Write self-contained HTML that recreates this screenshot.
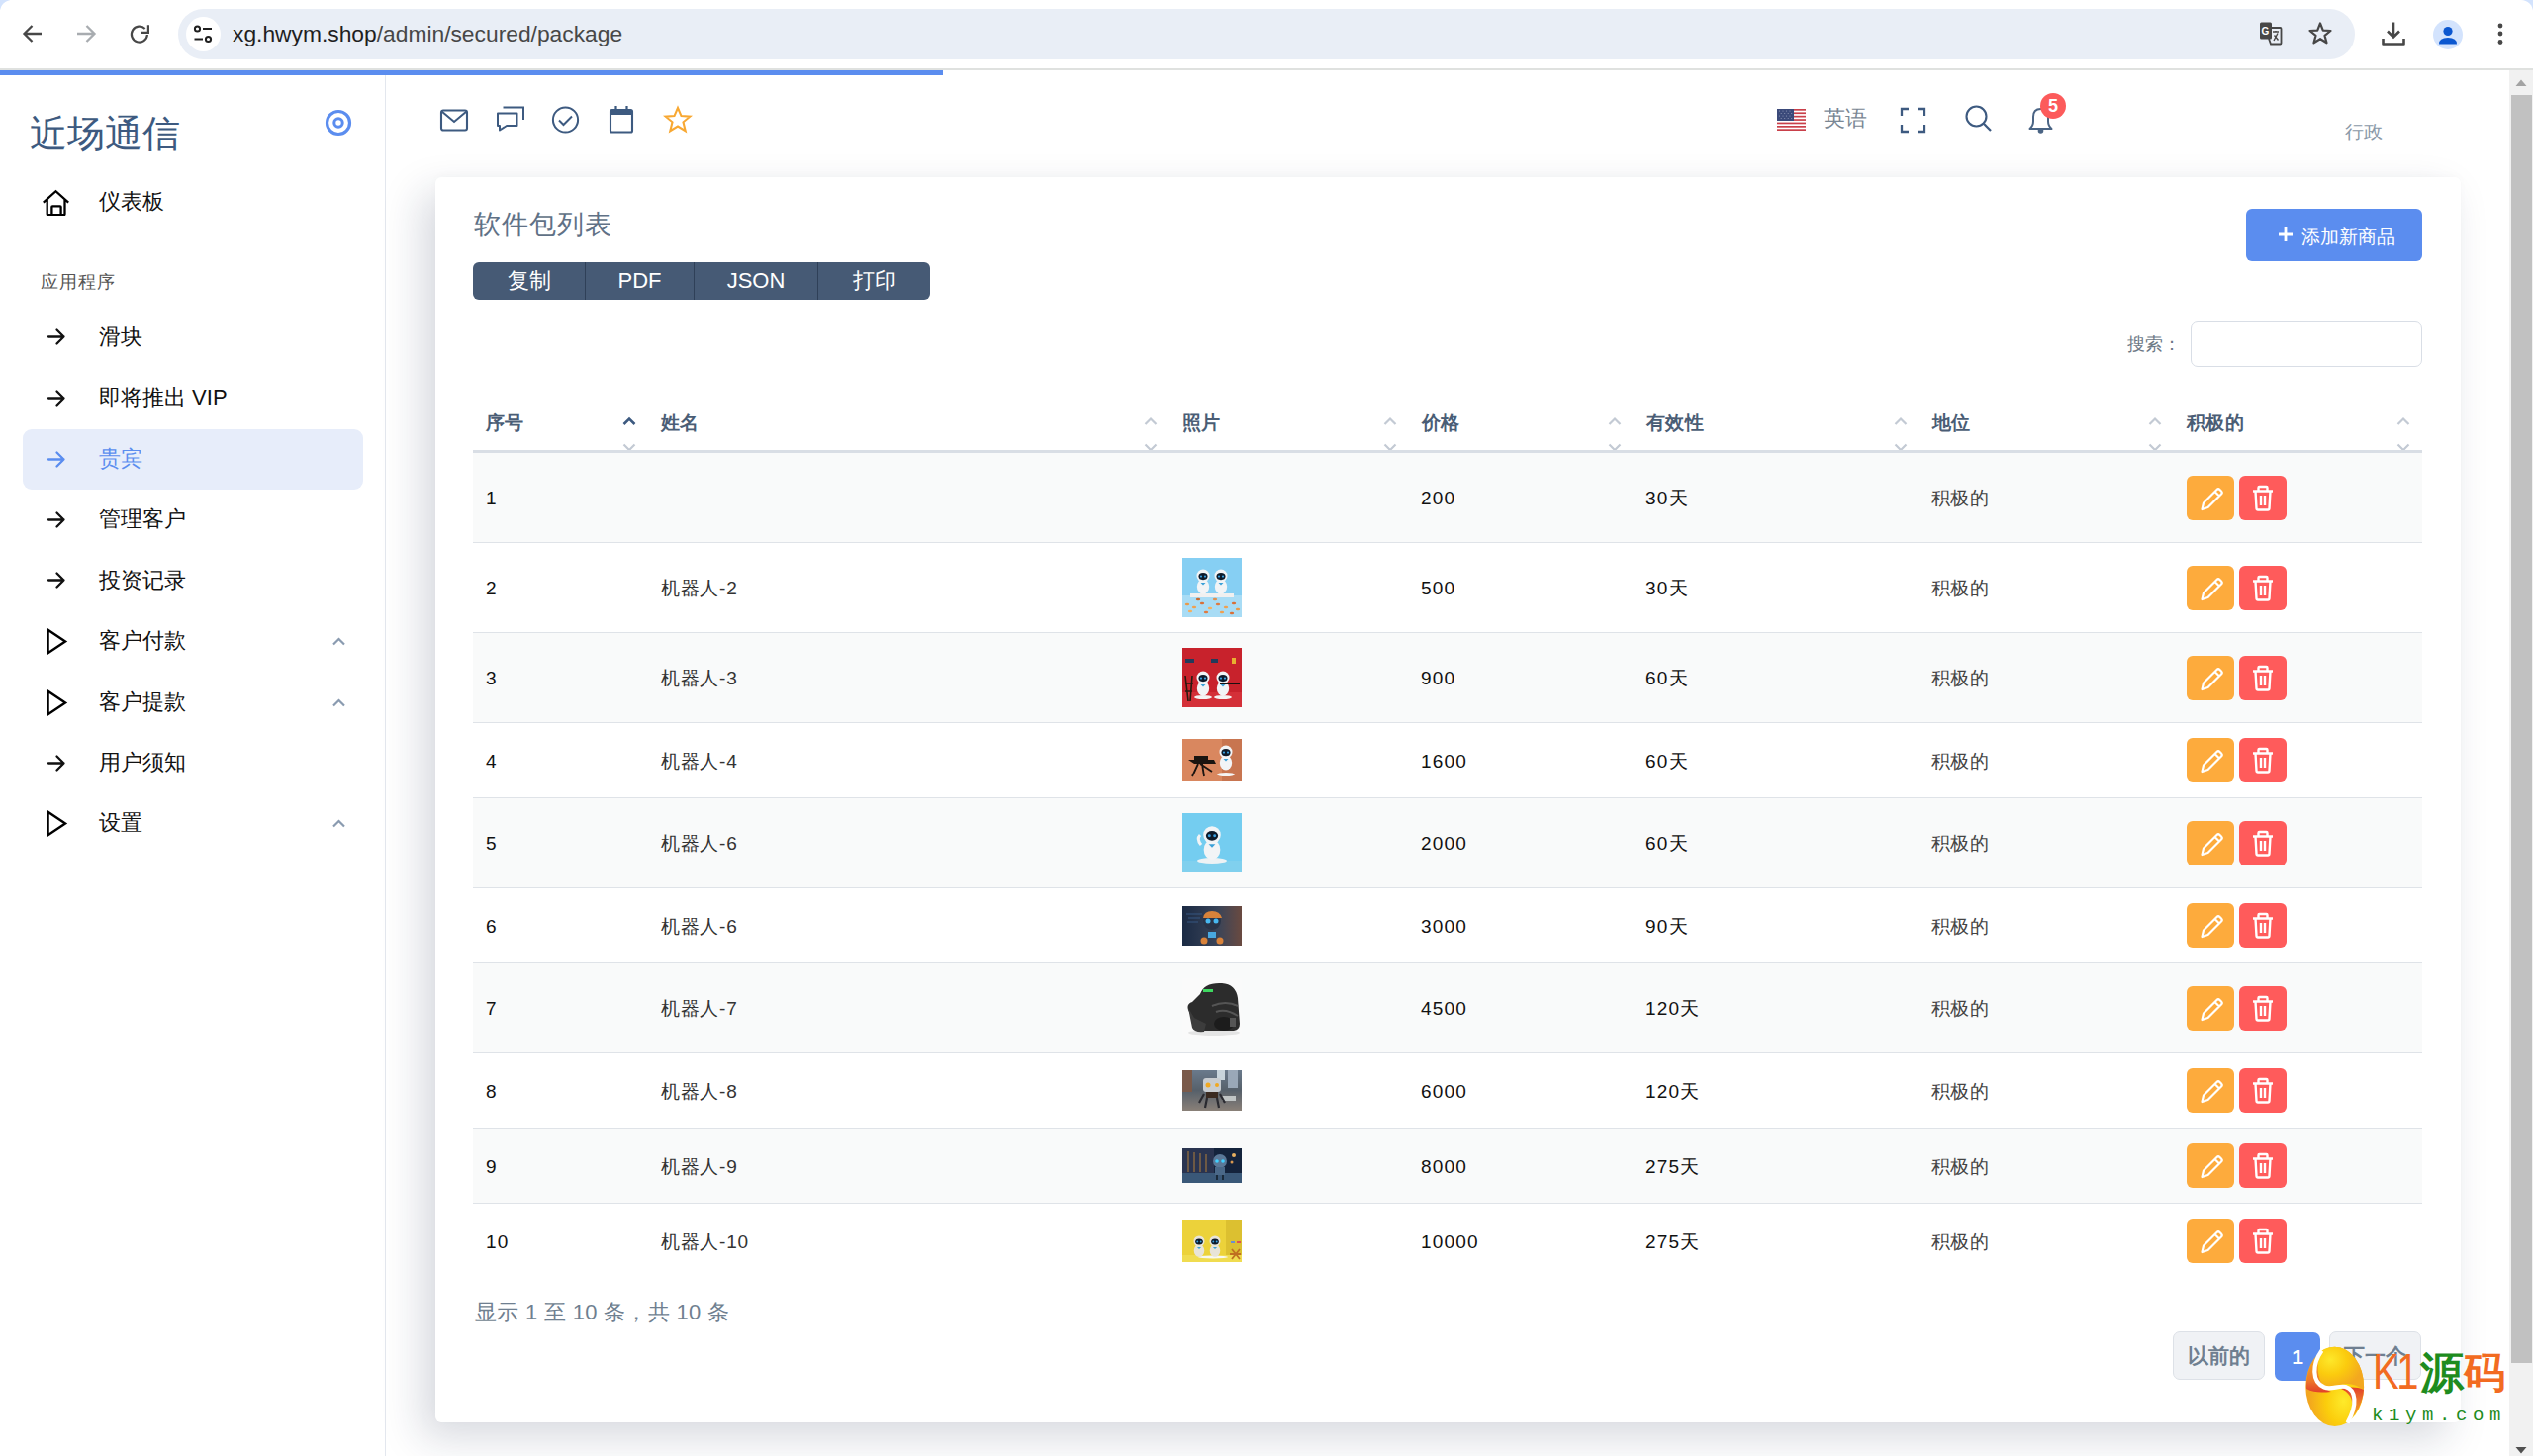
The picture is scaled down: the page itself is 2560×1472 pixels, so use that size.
<!DOCTYPE html>
<html><head><meta charset="utf-8">
<style>
*{box-sizing:border-box;margin:0;padding:0}
html,body{width:2560px;height:1472px;overflow:hidden;background:#fff;font-family:"Liberation Sans",sans-serif}
.abs{position:absolute}
/* chrome */
#chrome{position:absolute;left:0;top:0;width:2560px;height:70px;background:#fff}
#omni{position:absolute;left:180px;top:9px;width:2200px;height:51px;border-radius:26px;background:#e9eef6}
#url{position:absolute;left:235px;top:20px;font-size:22.8px;color:#1f1f1f;white-space:nowrap;line-height:28px}
#url span{color:#474747}
#line{position:absolute;left:0;top:69px;width:2560px;height:2px;background:#dfe1df}
#prog{position:absolute;z-index:5;left:0;top:71px;width:953px;height:5px;background:#5b8def}
/* sidebar */
#side{position:absolute;left:0;top:71px;width:390px;height:1401px;background:#fff;border-right:1px solid #e3e7ee}
.logo{position:absolute;left:30px;top:110px;font-size:38px;color:#3d5a80;line-height:50px;white-space:nowrap}
.nav{position:absolute;left:0;width:389px;height:30px}
.nav .t{position:absolute;left:100px;top:0;font-size:22px;line-height:30px;color:#333;white-space:nowrap}
.nav svg{position:absolute}
.act{position:absolute;left:23px;top:434px;width:344px;height:61px;border-radius:9px;background:#e7edfa}
.sec{position:absolute;left:41px;top:272px;font-size:17.5px;line-height:26px;color:#555;letter-spacing:1px}
/* header */
.hico{position:absolute}
/* card */
#card{position:absolute;left:440px;top:179px;width:2047px;height:1259px;background:#fff;border-radius:6px;box-shadow:-14px 16px 40px rgba(25,35,70,0.17),0 -2px 8px rgba(25,35,70,0.018)}
#scroll{position:absolute;left:2536px;top:71px;width:24px;height:1401px;background:#f1f1f1}
#thumb{position:absolute;left:2538px;top:96px;width:21px;height:1282px;background:#c1c1c1}
.ttl{position:absolute;left:479px;top:210px;font-size:27px;line-height:34px;color:#607186;letter-spacing:1px;white-space:nowrap}
.bg{position:absolute;left:478px;top:265px;width:462px;height:38px;border-radius:6px;background:#465a75;overflow:hidden}
.bg div{position:absolute;top:0;height:38px;line-height:38px;text-align:center;color:#fff;font-size:22px}
.addb{position:absolute;left:2270px;top:211px;width:178px;height:53px;border-radius:6px;background:#5b8def}
.addb span{position:absolute;left:56px;top:16px;font-size:19px;line-height:26px;color:#fff;letter-spacing:0px;white-space:nowrap}
.th{position:absolute;top:415px;font-size:19px;line-height:26px;font-weight:bold;color:#4a5d75;letter-spacing:0.3px;white-space:nowrap}
.td{position:absolute;font-size:19px;line-height:26px;color:#111;letter-spacing:1.2px;white-space:nowrap}
.td.nm{color:#333;letter-spacing:0.7px}
.td.st{color:#444;letter-spacing:0.3px}
.img{position:absolute;width:60px;overflow:hidden}.img svg{display:block}
.be{position:absolute;left:2210px;width:48px;height:45px;border-radius:6px;background:#fdab3d}
.bd{position:absolute;left:2263px;width:48px;height:45px;border-radius:6px;background:#ff5b5b}
.be svg,.bd svg{position:absolute;left:0;top:0}
.pg{position:absolute;top:1346px;width:93px;height:49px;border-radius:7px;background:#f0f2f5;border:1px solid #dde1e7;color:#6f7f90;font-weight:bold;font-size:21px;line-height:47px;text-align:center}
.r2{background:linear-gradient(#8fd3f5,#79c9ef 60%,#e9b27a)}
.r3{background:linear-gradient(#c41f2b,#d2323a)}
.r4{background:linear-gradient(90deg,#c9744e,#e0906a)}
.r5{background:linear-gradient(#72cdf0,#80d2f2)}
.r6{background:linear-gradient(90deg,#1f2d44,#3b4660 50%,#6a5040)}
.r7{background:radial-gradient(circle at 55% 55%,#2a2a2a 0,#3a3a3a 40%,#f5f5f5 60%)}
.r8{background:linear-gradient(#7890a8,#4a5260 60%,#b0a090)}
.r9{background:linear-gradient(90deg,#1a2640,#2a4060 50%,#1a2a40)}
.r10{background:linear-gradient(#f0d840,#e4c430)}
</style></head><body>
<div id="chrome">
  <div class="abs" style="left:0;top:0;width:10px;height:10px;background:#d3e3fd"></div>
  <div class="abs" style="left:0;top:0;width:12px;height:12px;background:#fff;border-top-left-radius:12px"></div>
  <div class="abs" style="left:2548px;top:0;width:12px;height:12px;background:#d3e3fd"></div><div class="abs" style="left:2536px;top:0;width:24px;height:14px;background:#fff;border-top-right-radius:12px"></div>
  <div id="omni"></div>
  <svg class="abs" style="left:20px;top:22px" width="26" height="24" viewBox="0 0 26 24"><path d="M22 12 H4.5 M12.5 4 L4.5 12 L12.5 20" fill="none" stroke="#474747" stroke-width="2.3"/></svg>
<svg class="abs" style="left:74px;top:22px" width="26" height="24" viewBox="0 0 26 24"><path d="M4 12 H21.5 M13.5 4 L21.5 12 L13.5 20" fill="none" stroke="#a8acb0" stroke-width="2.3"/></svg>
<svg class="abs" style="left:127px;top:20px" width="28" height="28" viewBox="0 0 28 28"><path d="M21.90 15.00 A8.0 8.0 0 1 1 19.65 9.04" fill="none" stroke="#474747" stroke-width="2.2"/><path d="M22.9 5.2 V12.8 H15.5" fill="none" stroke="#474747" stroke-width="2.2"/></svg>
<div class="abs" style="left:188px;top:17px;width:35px;height:35px;border-radius:18px;background:#fff"></div>
<svg class="abs" style="left:192px;top:21px" width="26" height="26" viewBox="0 0 26 26"><circle cx="7.5" cy="8" r="2.6" fill="none" stroke="#1f1f1f" stroke-width="2"/><path d="M13 8 H22" stroke="#1f1f1f" stroke-width="2"/><circle cx="18.5" cy="18.5" r="2.6" fill="none" stroke="#1f1f1f" stroke-width="2"/><path d="M4.5 18.5 H13" stroke="#1f1f1f" stroke-width="2"/></svg>
<svg class="abs" style="left:2282px;top:20px" width="28" height="28" viewBox="0 0 28 28"><rect x="2" y="2.5" width="12" height="17" rx="1.5" fill="#474747"/><path d="M13 8 H22.5 Q23.5 8 23.5 9 V23.5 Q23.5 24.5 22.5 24.5 H13 L11 19" fill="none" stroke="#474747" stroke-width="1.8"/><text x="3.5" y="15" font-size="10" font-weight="bold" fill="#fff" font-family="Liberation Sans">G</text><path d="M15 12 H21 M18 11 V12.5 M16 21 L20 13.5 M16.5 15.5 L20.5 20.5" stroke="#474747" stroke-width="1.4"/></svg>
<svg class="abs" style="left:2331px;top:20px" width="28" height="28" viewBox="0 0 28 28"><path d="M14 3.5 L16.8 10.6 L24.5 11 L18.5 15.9 L20.5 23.3 L14 19.2 L7.5 23.3 L9.5 15.9 L3.5 11 L11.2 10.6 Z" fill="none" stroke="#474747" stroke-width="2.2" stroke-linejoin="round"/></svg>
<svg class="abs" style="left:2405px;top:20px" width="28" height="28" viewBox="0 0 28 28"><path d="M14 2.5 V17.5 M8 11.5 L14 17.5 L20 11.5" fill="none" stroke="#474747" stroke-width="2.6"/><path d="M3.5 19 V24.5 H24.5 V19" fill="none" stroke="#474747" stroke-width="2.6" stroke-linejoin="round"/></svg>
<div class="abs" style="left:2459px;top:20px;width:30px;height:30px;border-radius:15px;background:#d3e3fd"></div>
<svg class="abs" style="left:2459px;top:20px" width="30" height="30" viewBox="0 0 30 30"><circle cx="15" cy="11.5" r="4.6" fill="#0b57d0"/><path d="M6 24.5 Q6 18 15 18 Q24 18 24 24.5 Z" fill="#0b57d0"/></svg>
<svg class="abs" style="left:2521px;top:21px" width="12" height="26" viewBox="0 0 12 26"><circle cx="6" cy="5" r="2.4" fill="#474747"/><circle cx="6" cy="13" r="2.4" fill="#474747"/><circle cx="6" cy="21.5" r="2.4" fill="#474747"/></svg>
<div id="url">xg.hwym.shop<span>/admin/secured/package</span></div>
</div>
<div id="line"></div>
<div id="prog"></div>
<div id="side"></div>
<div class="logo">近场通信</div>
<svg class="abs" style="left:327px;top:109px" width="30" height="30" viewBox="0 0 30 30"><circle cx="15" cy="15" r="11.5" fill="none" stroke="#5b8def" stroke-width="3.2"/><circle cx="15" cy="15" r="4.2" fill="none" stroke="#5b8def" stroke-width="3"/></svg>
<div class="sec">应用程序</div>
<div class="act"></div>
<div class="nav" style="top:189.0px"><svg style="left:42px;top:1px" width="28" height="28" viewBox="0 0 28 28"><path d="M1.8 14.6 L14.5 3.2 L27.2 14.6 M5.7 11.5 V26.2 Q5.7 27.2 6.7 27.2 H22.5 Q23.5 27.2 23.5 26.2 V11.5 M10.4 27 V19 Q10.4 18.3 11.1 18.3 H18.9 Q19.6 18.3 19.6 19 V27" fill="none" stroke="#000" stroke-width="2.3" stroke-linejoin="miter"/></svg><div class="t" style="color:#111">仪表板</div></div>
<div class="nav" style="top:325.5px"><svg style="left:47px;top:5.5px" width="20" height="19" viewBox="0 0 20 19"><path d="M2 9.5 H17.5 M10.5 2.5 L17.5 9.5 L10.5 16.5" fill="none" stroke="#111" stroke-width="2.3" stroke-linecap="round" stroke-linejoin="round"/></svg><div class="t" style="color:#111">滑块</div></div>
<div class="nav" style="top:387.0px"><svg style="left:47px;top:5.5px" width="20" height="19" viewBox="0 0 20 19"><path d="M2 9.5 H17.5 M10.5 2.5 L17.5 9.5 L10.5 16.5" fill="none" stroke="#111" stroke-width="2.3" stroke-linecap="round" stroke-linejoin="round"/></svg><div class="t" style="color:#111">即将推出 VIP</div></div>
<div class="nav" style="top:449.0px"><svg style="left:47px;top:5.5px" width="20" height="19" viewBox="0 0 20 19"><path d="M2 9.5 H17.5 M10.5 2.5 L17.5 9.5 L10.5 16.5" fill="none" stroke="#5b8def" stroke-width="2.3" stroke-linecap="round" stroke-linejoin="round"/></svg><div class="t" style="color:#5b8def">贵宾</div></div>
<div class="nav" style="top:510.0px"><svg style="left:47px;top:5.5px" width="20" height="19" viewBox="0 0 20 19"><path d="M2 9.5 H17.5 M10.5 2.5 L17.5 9.5 L10.5 16.5" fill="none" stroke="#111" stroke-width="2.3" stroke-linecap="round" stroke-linejoin="round"/></svg><div class="t" style="color:#111">管理客户</div></div>
<div class="nav" style="top:571.5px"><svg style="left:47px;top:5.5px" width="20" height="19" viewBox="0 0 20 19"><path d="M2 9.5 H17.5 M10.5 2.5 L17.5 9.5 L10.5 16.5" fill="none" stroke="#111" stroke-width="2.3" stroke-linecap="round" stroke-linejoin="round"/></svg><div class="t" style="color:#111">投资记录</div></div>
<div class="nav" style="top:633.0px"><svg style="left:45px;top:1px" width="24" height="29" viewBox="0 0 24 29"><path d="M3.5 2.8 L21 14.5 L3.5 26.2 Z" fill="none" stroke="#000" stroke-width="2.5" stroke-linejoin="miter"/></svg><div class="t" style="color:#111">客户付款</div><svg style="left:335px;top:10px" width="15" height="11" viewBox="0 0 15 11"><path d="M2 8.5 L7.5 3 L13 8.5" fill="none" stroke="#8a9bb0" stroke-width="2.2"/></svg></div>
<div class="nav" style="top:694.5px"><svg style="left:45px;top:1px" width="24" height="29" viewBox="0 0 24 29"><path d="M3.5 2.8 L21 14.5 L3.5 26.2 Z" fill="none" stroke="#000" stroke-width="2.5" stroke-linejoin="miter"/></svg><div class="t" style="color:#111">客户提款</div><svg style="left:335px;top:10px" width="15" height="11" viewBox="0 0 15 11"><path d="M2 8.5 L7.5 3 L13 8.5" fill="none" stroke="#8a9bb0" stroke-width="2.2"/></svg></div>
<div class="nav" style="top:756.0px"><svg style="left:47px;top:5.5px" width="20" height="19" viewBox="0 0 20 19"><path d="M2 9.5 H17.5 M10.5 2.5 L17.5 9.5 L10.5 16.5" fill="none" stroke="#111" stroke-width="2.3" stroke-linecap="round" stroke-linejoin="round"/></svg><div class="t" style="color:#111">用户须知</div></div>
<div class="nav" style="top:817.0px"><svg style="left:45px;top:1px" width="24" height="29" viewBox="0 0 24 29"><path d="M3.5 2.8 L21 14.5 L3.5 26.2 Z" fill="none" stroke="#000" stroke-width="2.5" stroke-linejoin="miter"/></svg><div class="t" style="color:#111">设置</div><svg style="left:335px;top:10px" width="15" height="11" viewBox="0 0 15 11"><path d="M2 8.5 L7.5 3 L13 8.5" fill="none" stroke="#8a9bb0" stroke-width="2.2"/></svg></div>
<!-- header icons -->
<svg class="abs" style="left:443px;top:109px" width="32" height="25" viewBox="0 0 32 25"><rect x="3" y="2.5" width="26" height="20" rx="2" fill="none" stroke="#3d5a80" stroke-width="2.1"/><path d="M3.5 3.5 L16 14 L28.5 3.5" fill="none" stroke="#3d5a80" stroke-width="2.1"/></svg>
<svg class="abs" style="left:500px;top:106px" width="32" height="30" viewBox="0 0 32 30"><path d="M8.5 2.5 H29 V15" fill="none" stroke="#3d5a80" stroke-width="2.0"/><path d="M3 8.5 H22.5 V21 H12 L5 25.5 V21 H3 Z" fill="none" stroke="#3d5a80" stroke-width="2.0" stroke-linejoin="round"/></svg>
<svg class="abs" style="left:556px;top:106px" width="31" height="30" viewBox="0 0 31 30"><circle cx="15.5" cy="15" r="12.6" fill="none" stroke="#3d5a80" stroke-width="2.0"/><path d="M9 15.5 L13.5 20 L22 11.5" fill="none" stroke="#3d5a80" stroke-width="2.0"/></svg>
<svg class="abs" style="left:614px;top:106px" width="28" height="30" viewBox="0 0 28 30"><rect x="3" y="5" width="22" height="22.5" rx="1.5" fill="none" stroke="#3d5a80" stroke-width="2.1"/><rect x="3" y="5" width="22" height="5" fill="#3d5a80"/><path d="M8.5 1 V6 M19.5 1 V6" stroke="#3d5a80" stroke-width="2.2"/></svg>
<svg class="abs" style="left:669px;top:105px" width="32" height="32" viewBox="0 0 32 32"><path d="M16 4 L19.5 12.1 L28.3 12.7 L21.5 18.3 L23.7 27.2 L16 22.5 L8.3 27.2 L10.5 18.3 L3.7 12.7 L12.5 12.1 Z" fill="none" stroke="#f8a832" stroke-width="2.1" stroke-linejoin="miter"/></svg>
<!-- flag -->
<svg class="abs" style="left:1796px;top:110px" width="29" height="22" viewBox="0 0 29 22"><rect width="29" height="22" fill="#fff"/><g fill="#c9404a"><rect y="0" width="29" height="1.7"/><rect y="3.4" width="29" height="1.7"/><rect y="6.8" width="29" height="1.7"/><rect y="10.2" width="29" height="1.7"/><rect y="13.6" width="29" height="1.7"/><rect y="17" width="29" height="1.7"/><rect y="20.3" width="29" height="1.7"/></g><rect width="17" height="12" fill="#3b4a7a"/><g fill="#c8cce0" opacity="0.6"><circle cx="2.5" cy="2" r="0.6"/><circle cx="6" cy="2" r="0.6"/><circle cx="9.5" cy="2" r="0.6"/><circle cx="13" cy="2" r="0.6"/><circle cx="4.2" cy="4.5" r="0.6"/><circle cx="7.7" cy="4.5" r="0.6"/><circle cx="11.2" cy="4.5" r="0.6"/><circle cx="14.7" cy="4.5" r="0.6"/><circle cx="2.5" cy="7" r="0.6"/><circle cx="6" cy="7" r="0.6"/><circle cx="9.5" cy="7" r="0.6"/><circle cx="13" cy="7" r="0.6"/><circle cx="4.2" cy="9.5" r="0.6"/><circle cx="7.7" cy="9.5" r="0.6"/><circle cx="11.2" cy="9.5" r="0.6"/><circle cx="14.7" cy="9.5" r="0.6"/></g></svg>
<div class="abs" style="left:1843px;top:105px;font-size:22px;line-height:30px;color:#7a8794">英语</div>
<svg class="abs" style="left:1919px;top:107px" width="29" height="29" viewBox="0 0 29 29"><path d="M3 10 V3 H10 M19 3 H26 V10 M26 19 V26 H19 M10 26 H3 V19" fill="none" stroke="#3d5a80" stroke-width="2.3"/></svg>
<svg class="abs" style="left:1985px;top:105px" width="30" height="30" viewBox="0 0 30 30"><circle cx="12.5" cy="12.5" r="10" fill="none" stroke="#3d5a80" stroke-width="2.1"/><path d="M19.8 19.8 L27 27" stroke="#3d5a80" stroke-width="2.3"/></svg>
<svg class="abs" style="left:2048px;top:106px" width="30" height="30" viewBox="0 0 30 30"><path d="M3.5 24 Q7 21 7 16.5 V12 Q7 4 14.5 4 Q22 4 22 12 V16.5 Q22 21 25.5 24 Z" fill="none" stroke="#4a6484" stroke-width="2" stroke-linejoin="round"/><circle cx="14.5" cy="26" r="2.8" fill="#4a6484"/></svg>
<div class="abs" style="left:2062px;top:94px;width:26px;height:26px;border-radius:13px;background:#fc5b5b;color:#fff;font-size:18px;font-weight:bold;line-height:26px;text-align:center">5</div>
<div class="abs" style="left:2370px;top:121px;font-size:19px;line-height:26px;color:#8a99a8">行政</div>
<div id="card"></div>
<div class="ttl">软件包列表</div>
<div class="bg"><div style="left:0;width:113px">复制</div><div style="left:113px;width:110px;border-left:1px solid #2f4058">PDF</div><div style="left:223px;width:125px;border-left:1px solid #2f4058">JSON</div><div style="left:348px;width:114px;border-left:1px solid #2f4058">打印</div></div>
<div class="addb"><svg style="position:absolute;left:32px;top:18px" width="16" height="16" viewBox="0 0 16 16"><path d="M8 1V15M1 8H15" stroke="#fff" stroke-width="2.8"/></svg><span>添加新商品</span></div>
<div class="abs" style="left:2150px;top:335px;font-size:18px;line-height:26px;color:#6b7785">搜索：</div>
<div class="abs" style="left:2214px;top:325px;width:234px;height:46px;border:1.5px solid #d9dee6;border-radius:7px;background:#fff"></div>
<div class="th" style="left:491px">序号</div>
<svg class="abs" style="left:627.5px;top:419px" width="16" height="40" viewBox="0 0 16 40"><path d="M2.5 10 L8 4.5 L13.5 10" fill="none" stroke="#3d5a80" stroke-width="2.6"/><path d="M2.5 30.5 L8 36 L13.5 30.5" fill="none" stroke="#c3cad4" stroke-width="2.2"/></svg>
<div class="th" style="left:668px">姓名</div>
<svg class="abs" style="left:1154.5px;top:419px" width="16" height="40" viewBox="0 0 16 40"><path d="M2.5 10 L8 4.5 L13.5 10" fill="none" stroke="#c3cad4" stroke-width="2.2"/><path d="M2.5 30.5 L8 36 L13.5 30.5" fill="none" stroke="#c3cad4" stroke-width="2.2"/></svg>
<div class="th" style="left:1195px">照片</div>
<svg class="abs" style="left:1396.5px;top:419px" width="16" height="40" viewBox="0 0 16 40"><path d="M2.5 10 L8 4.5 L13.5 10" fill="none" stroke="#c3cad4" stroke-width="2.2"/><path d="M2.5 30.5 L8 36 L13.5 30.5" fill="none" stroke="#c3cad4" stroke-width="2.2"/></svg>
<div class="th" style="left:1437px">价格</div>
<svg class="abs" style="left:1623.5px;top:419px" width="16" height="40" viewBox="0 0 16 40"><path d="M2.5 10 L8 4.5 L13.5 10" fill="none" stroke="#c3cad4" stroke-width="2.2"/><path d="M2.5 30.5 L8 36 L13.5 30.5" fill="none" stroke="#c3cad4" stroke-width="2.2"/></svg>
<div class="th" style="left:1664px">有效性</div>
<svg class="abs" style="left:1912.5px;top:419px" width="16" height="40" viewBox="0 0 16 40"><path d="M2.5 10 L8 4.5 L13.5 10" fill="none" stroke="#c3cad4" stroke-width="2.2"/><path d="M2.5 30.5 L8 36 L13.5 30.5" fill="none" stroke="#c3cad4" stroke-width="2.2"/></svg>
<div class="th" style="left:1953px">地位</div>
<svg class="abs" style="left:2169.5px;top:419px" width="16" height="40" viewBox="0 0 16 40"><path d="M2.5 10 L8 4.5 L13.5 10" fill="none" stroke="#c3cad4" stroke-width="2.2"/><path d="M2.5 30.5 L8 36 L13.5 30.5" fill="none" stroke="#c3cad4" stroke-width="2.2"/></svg>
<div class="th" style="left:2210px">积极的</div>
<svg class="abs" style="left:2420.5px;top:419px" width="16" height="40" viewBox="0 0 16 40"><path d="M2.5 10 L8 4.5 L13.5 10" fill="none" stroke="#c3cad4" stroke-width="2.2"/><path d="M2.5 30.5 L8 36 L13.5 30.5" fill="none" stroke="#c3cad4" stroke-width="2.2"/></svg>
<div class="abs" style="left:478px;top:455px;width:1970px;height:3px;background:#d9dee5"></div>
<div class="abs" style="left:478px;top:458px;width:1970px;height:90px;background:#f9fafa;border-top:0px solid #dfe3e8"></div>
<div class="td" style="left:491px;top:491.0px">1</div>
<div class="td" style="left:1436px;top:491.0px">200</div>
<div class="td" style="left:1663px;top:491.0px">30天</div>
<div class="td st" style="left:1952px;top:491.0px">积极的</div>
<div class="be" style="top:480.5px"><svg width="48" height="45" viewBox="0 0 48 45"><path d="M15.5 34 L17 27.5 L30.5 14 Q32 12.5 33.5 14 L35 15.5 Q36.5 17 35 18.5 L21.5 32 Z M28.5 16 L33 20.5" fill="none" stroke="#fff" stroke-width="2.2" stroke-linejoin="round"/></svg></div>
<div class="bd" style="top:480.5px"><svg width="48" height="45" viewBox="0 0 48 45"><path d="M14 15.5 H34 M19.5 15.5 V12 Q19.5 11 20.5 11 H27.5 Q28.5 11 28.5 12 V15.5 M16.5 15.5 L17.5 33 Q17.6 34.5 19 34.5 H29 Q30.4 34.5 30.5 33 L31.5 15.5 M22 20 V30 M26 20 V30" fill="none" stroke="#fff" stroke-width="2.4"/></svg></div>
<div class="abs" style="left:478px;top:548px;width:1970px;height:91px;background:#fff;border-top:1px solid #dfe3e8"></div>
<div class="td" style="left:491px;top:582.0px">2</div>
<div class="td nm" style="left:668px;top:582.0px">机器人-2</div>
<div class="img r2" style="left:1195px;top:564.0px;height:60px"><svg width="60" height="60" viewBox="0 0 60 60"><rect width="60" height="60" fill="#86cff3"/><rect y="38" width="60" height="22" fill="#a8dcf5"/><rect x="8" y="36" width="44" height="4" fill="#f0f0f0"/><ellipse cx="21" cy="29.049999999999997" rx="6.175" ry="7.475" fill="#f2f4f6"/><circle cx="21" cy="18" r="6.5" fill="#f2f4f6"/><ellipse cx="21" cy="18.6" rx="4.55" ry="3.575" fill="#0d1a2a"/><circle cx="19.0" cy="18.6" r="1.1" fill="#3aa0e0"/><circle cx="23.0" cy="18.6" r="1.1" fill="#3aa0e0"/><path d="M18.5 25.0 L21 27.5 L23.5 25.0 Z" fill="#3aa0d8"/><ellipse cx="39" cy="29.049999999999997" rx="6.175" ry="7.475" fill="#f2f4f6"/><circle cx="39" cy="18" r="6.5" fill="#f2f4f6"/><ellipse cx="39" cy="18.6" rx="4.55" ry="3.575" fill="#0d1a2a"/><circle cx="37.0" cy="18.6" r="1.1" fill="#3aa0e0"/><circle cx="41.0" cy="18.6" r="1.1" fill="#3aa0e0"/><path d="M36.5 25.0 L39 27.5 L41.5 25.0 Z" fill="#3aa0d8"/><ellipse cx="5" cy="47" rx="2.2" ry="1.3" fill="#e89a4a"/><ellipse cx="12" cy="50" rx="2.2" ry="1.3" fill="#f0a050"/><ellipse cx="20" cy="46" rx="2.2" ry="1.3" fill="#d8703a"/><ellipse cx="28" cy="51" rx="2.2" ry="1.3" fill="#f4b060"/><ellipse cx="36" cy="47" rx="2.2" ry="1.3" fill="#e07a40"/><ellipse cx="44" cy="50" rx="2.2" ry="1.3" fill="#f0a050"/><ellipse cx="52" cy="46" rx="2.2" ry="1.3" fill="#d87038"/><ellipse cx="56" cy="52" rx="2.2" ry="1.3" fill="#e89a4a"/><ellipse cx="8" cy="54" rx="2.2" ry="1.3" fill="#f4b060"/><ellipse cx="24" cy="55" rx="2.2" ry="1.3" fill="#e07a40"/><ellipse cx="40" cy="55" rx="2.2" ry="1.3" fill="#f0a050"/><ellipse cx="50" cy="56" rx="2.2" ry="1.3" fill="#d8703a"/><ellipse cx="16" cy="42" rx="2.2" ry="1.3" fill="#c86a30"/><ellipse cx="33" cy="42" rx="2.2" ry="1.3" fill="#e09050"/></svg></div>
<div class="td" style="left:1436px;top:582.0px">500</div>
<div class="td" style="left:1663px;top:582.0px">30天</div>
<div class="td st" style="left:1952px;top:582.0px">积极的</div>
<div class="be" style="top:571.5px"><svg width="48" height="45" viewBox="0 0 48 45"><path d="M15.5 34 L17 27.5 L30.5 14 Q32 12.5 33.5 14 L35 15.5 Q36.5 17 35 18.5 L21.5 32 Z M28.5 16 L33 20.5" fill="none" stroke="#fff" stroke-width="2.2" stroke-linejoin="round"/></svg></div>
<div class="bd" style="top:571.5px"><svg width="48" height="45" viewBox="0 0 48 45"><path d="M14 15.5 H34 M19.5 15.5 V12 Q19.5 11 20.5 11 H27.5 Q28.5 11 28.5 12 V15.5 M16.5 15.5 L17.5 33 Q17.6 34.5 19 34.5 H29 Q30.4 34.5 30.5 33 L31.5 15.5 M22 20 V30 M26 20 V30" fill="none" stroke="#fff" stroke-width="2.4"/></svg></div>
<div class="abs" style="left:478px;top:639px;width:1970px;height:91px;background:#f9fafa;border-top:1px solid #dfe3e8"></div>
<div class="td" style="left:491px;top:673.0px">3</div>
<div class="td nm" style="left:668px;top:673.0px">机器人-3</div>
<div class="img r3" style="left:1195px;top:655.0px;height:60px"><svg width="60" height="60" viewBox="0 0 60 60"><rect width="60" height="60" fill="#c8222c"/><rect y="45" width="60" height="15" fill="#d43038"/><rect x="3" y="11" width="9" height="4" fill="#243a5a"/><rect x="29" y="11" width="7" height="4" fill="#243a5a"/><rect x="50" y="10" width="4" height="6" fill="#e8b030"/><path d="M3 28 L6 54 M10 28 L8 54 M3 36 H11 M3 44 H10" stroke="#2a1a10" stroke-width="1.6"/><ellipse cx="21" cy="41.05" rx="6.175" ry="7.475" fill="#f2f4f6"/><circle cx="21" cy="30" r="6.5" fill="#f2f4f6"/><ellipse cx="21" cy="30.6" rx="4.55" ry="3.575" fill="#0d1a2a"/><circle cx="19.0" cy="30.6" r="1.1" fill="#3aa0e0"/><circle cx="23.0" cy="30.6" r="1.1" fill="#3aa0e0"/><path d="M18.5 37.0 L21 39.5 L23.5 37.0 Z" fill="#3aa0d8"/><ellipse cx="41" cy="41.05" rx="6.175" ry="7.475" fill="#f2f4f6"/><circle cx="41" cy="30" r="6.5" fill="#f2f4f6"/><ellipse cx="41" cy="30.6" rx="4.55" ry="3.575" fill="#0d1a2a"/><circle cx="39.0" cy="30.6" r="1.1" fill="#3aa0e0"/><circle cx="43.0" cy="30.6" r="1.1" fill="#3aa0e0"/><path d="M38.5 37.0 L41 39.5 L43.5 37.0 Z" fill="#3aa0d8"/><ellipse cx="21" cy="50" rx="9" ry="2" fill="#f4f4f4"/><ellipse cx="41" cy="50" rx="9" ry="2" fill="#f4f4f4"/><path d="M38 36 L58 36" stroke="#1a1010" stroke-width="2"/></svg></div>
<div class="td" style="left:1436px;top:673.0px">900</div>
<div class="td" style="left:1663px;top:673.0px">60天</div>
<div class="td st" style="left:1952px;top:673.0px">积极的</div>
<div class="be" style="top:662.5px"><svg width="48" height="45" viewBox="0 0 48 45"><path d="M15.5 34 L17 27.5 L30.5 14 Q32 12.5 33.5 14 L35 15.5 Q36.5 17 35 18.5 L21.5 32 Z M28.5 16 L33 20.5" fill="none" stroke="#fff" stroke-width="2.2" stroke-linejoin="round"/></svg></div>
<div class="bd" style="top:662.5px"><svg width="48" height="45" viewBox="0 0 48 45"><path d="M14 15.5 H34 M19.5 15.5 V12 Q19.5 11 20.5 11 H27.5 Q28.5 11 28.5 12 V15.5 M16.5 15.5 L17.5 33 Q17.6 34.5 19 34.5 H29 Q30.4 34.5 30.5 33 L31.5 15.5 M22 20 V30 M26 20 V30" fill="none" stroke="#fff" stroke-width="2.4"/></svg></div>
<div class="abs" style="left:478px;top:730px;width:1970px;height:76px;background:#fff;border-top:1px solid #dfe3e8"></div>
<div class="td" style="left:491px;top:756.5px">4</div>
<div class="td nm" style="left:668px;top:756.5px">机器人-4</div>
<div class="img r4" style="left:1195px;top:747.0px;height:43px"><svg width="60" height="43" viewBox="0 0 60 43"><rect width="60" height="43" fill="#d9875f"/><rect x="40" width="20" height="43" fill="#c87550"/><path d="M6 21 H32 L34 25 H12 Z" fill="#1a1410"/><rect x="12" y="17" width="14" height="8" fill="#1a1410"/><path d="M16 25 L10 38 M20 25 L22 38 M18 25 L30 33" stroke="#1a1410" stroke-width="1.8"/><ellipse cx="44" cy="24.049999999999997" rx="6.175" ry="7.475" fill="#f2f4f6"/><circle cx="44" cy="13" r="6.5" fill="#f2f4f6"/><ellipse cx="44" cy="13.6" rx="4.55" ry="3.575" fill="#0d1a2a"/><circle cx="42.0" cy="13.6" r="1.1" fill="#3aa0e0"/><circle cx="46.0" cy="13.6" r="1.1" fill="#3aa0e0"/><path d="M41.5 20.0 L44 22.5 L46.5 20.0 Z" fill="#3aa0d8"/><ellipse cx="44" cy="36" rx="9" ry="2" fill="#f4f4f4"/></svg></div>
<div class="td" style="left:1436px;top:756.5px">1600</div>
<div class="td" style="left:1663px;top:756.5px">60天</div>
<div class="td st" style="left:1952px;top:756.5px">积极的</div>
<div class="be" style="top:746.0px"><svg width="48" height="45" viewBox="0 0 48 45"><path d="M15.5 34 L17 27.5 L30.5 14 Q32 12.5 33.5 14 L35 15.5 Q36.5 17 35 18.5 L21.5 32 Z M28.5 16 L33 20.5" fill="none" stroke="#fff" stroke-width="2.2" stroke-linejoin="round"/></svg></div>
<div class="bd" style="top:746.0px"><svg width="48" height="45" viewBox="0 0 48 45"><path d="M14 15.5 H34 M19.5 15.5 V12 Q19.5 11 20.5 11 H27.5 Q28.5 11 28.5 12 V15.5 M16.5 15.5 L17.5 33 Q17.6 34.5 19 34.5 H29 Q30.4 34.5 30.5 33 L31.5 15.5 M22 20 V30 M26 20 V30" fill="none" stroke="#fff" stroke-width="2.4"/></svg></div>
<div class="abs" style="left:478px;top:806px;width:1970px;height:91px;background:#f9fafa;border-top:1px solid #dfe3e8"></div>
<div class="td" style="left:491px;top:840.0px">5</div>
<div class="td nm" style="left:668px;top:840.0px">机器人-6</div>
<div class="img r5" style="left:1195px;top:822.0px;height:60px"><svg width="60" height="60" viewBox="0 0 60 60"><rect width="60" height="60" fill="#74cdf0"/><rect y="48" width="60" height="12" fill="#80d0ee"/><ellipse cx="30" cy="48" rx="15" ry="3" fill="#eef2f4"/><ellipse cx="30" cy="36.917500000000004" rx="8.33625" ry="10.09125" fill="#f2f4f6"/><circle cx="30" cy="22" r="8.775" fill="#f2f4f6"/><ellipse cx="30" cy="22.81" rx="6.1425" ry="4.826250000000001" fill="#0d1a2a"/><circle cx="27.3" cy="22.81" r="1.4850000000000003" fill="#3aa0e0"/><circle cx="32.7" cy="22.81" r="1.4850000000000003" fill="#3aa0e0"/><path d="M26.625 31.275 L30 34.825 L33.375 31.275 Z" fill="#3aa0d8"/><path d="M19 32 Q14 26 18 22" stroke="#f2f4f6" stroke-width="3" fill="none"/></svg></div>
<div class="td" style="left:1436px;top:840.0px">2000</div>
<div class="td" style="left:1663px;top:840.0px">60天</div>
<div class="td st" style="left:1952px;top:840.0px">积极的</div>
<div class="be" style="top:829.5px"><svg width="48" height="45" viewBox="0 0 48 45"><path d="M15.5 34 L17 27.5 L30.5 14 Q32 12.5 33.5 14 L35 15.5 Q36.5 17 35 18.5 L21.5 32 Z M28.5 16 L33 20.5" fill="none" stroke="#fff" stroke-width="2.2" stroke-linejoin="round"/></svg></div>
<div class="bd" style="top:829.5px"><svg width="48" height="45" viewBox="0 0 48 45"><path d="M14 15.5 H34 M19.5 15.5 V12 Q19.5 11 20.5 11 H27.5 Q28.5 11 28.5 12 V15.5 M16.5 15.5 L17.5 33 Q17.6 34.5 19 34.5 H29 Q30.4 34.5 30.5 33 L31.5 15.5 M22 20 V30 M26 20 V30" fill="none" stroke="#fff" stroke-width="2.4"/></svg></div>
<div class="abs" style="left:478px;top:897px;width:1970px;height:76px;background:#fff;border-top:1px solid #dfe3e8"></div>
<div class="td" style="left:491px;top:923.5px">6</div>
<div class="td nm" style="left:668px;top:923.5px">机器人-6</div>
<div class="img r6" style="left:1195px;top:915.5px;height:40px"><svg width="60" height="40" viewBox="0 0 60 40"><defs><linearGradient id="g6" x1="0" x2="1"><stop offset="0" stop-color="#1a2a44"/><stop offset="0.6" stop-color="#3a4458"/><stop offset="1" stop-color="#6a4a40"/></linearGradient></defs><rect width="60" height="40" fill="url(#g6)"/><path d="M4 8 H20 M6 12 H18 M5 16 H16" stroke="#3a6090" stroke-width="0.8"/><circle cx="30" cy="15" r="9" fill="#2a3448"/><path d="M21 12 Q22 5 30 5 Q38 5 40 12" fill="#d8823a"/><circle cx="26" cy="15" r="2.5" fill="#48b8f0"/><circle cx="34" cy="15" r="2.5" fill="#48b8f0"/><rect x="26" y="26" width="8" height="6" fill="#48a8e0"/><circle cx="22" cy="35" r="3.5" fill="#d8823a"/><circle cx="38" cy="35" r="3.5" fill="#d8823a"/></svg></div>
<div class="td" style="left:1436px;top:923.5px">3000</div>
<div class="td" style="left:1663px;top:923.5px">90天</div>
<div class="td st" style="left:1952px;top:923.5px">积极的</div>
<div class="be" style="top:913.0px"><svg width="48" height="45" viewBox="0 0 48 45"><path d="M15.5 34 L17 27.5 L30.5 14 Q32 12.5 33.5 14 L35 15.5 Q36.5 17 35 18.5 L21.5 32 Z M28.5 16 L33 20.5" fill="none" stroke="#fff" stroke-width="2.2" stroke-linejoin="round"/></svg></div>
<div class="bd" style="top:913.0px"><svg width="48" height="45" viewBox="0 0 48 45"><path d="M14 15.5 H34 M19.5 15.5 V12 Q19.5 11 20.5 11 H27.5 Q28.5 11 28.5 12 V15.5 M16.5 15.5 L17.5 33 Q17.6 34.5 19 34.5 H29 Q30.4 34.5 30.5 33 L31.5 15.5 M22 20 V30 M26 20 V30" fill="none" stroke="#fff" stroke-width="2.4"/></svg></div>
<div class="abs" style="left:478px;top:973px;width:1970px;height:91px;background:#f9fafa;border-top:1px solid #dfe3e8"></div>
<div class="td" style="left:491px;top:1007.0px">7</div>
<div class="td nm" style="left:668px;top:1007.0px">机器人-7</div>
<div class="img r7" style="left:1195px;top:989.0px;height:60px"><svg width="60" height="60" viewBox="0 0 60 60"><rect width="60" height="60" fill="#fafafa"/><ellipse cx="32" cy="55" rx="26" ry="3" fill="#e4e4e4"/><path d="M18 16 Q22 4 40 5 Q54 6 56 20 L58 46 Q58 52 52 53 L22 53 Q14 52 12 44 L6 32 Q4 26 10 24 Z" fill="#2c2c2c"/><path d="M6 30 L10 50 Q12 55 22 54 L24 46 L12 40 Z" fill="#3c3c3c"/><rect x="21" y="11" width="10" height="3" fill="#3ed860"/><path d="M34 34 Q44 30 56 38 M30 28 Q44 22 56 28" stroke="#555" stroke-width="2" fill="none"/><ellipse cx="42" cy="46" rx="10" ry="7" fill="#1c1c1c"/><rect x="48" y="40" width="6" height="9" fill="#555"/></svg></div>
<div class="td" style="left:1436px;top:1007.0px">4500</div>
<div class="td" style="left:1663px;top:1007.0px">120天</div>
<div class="td st" style="left:1952px;top:1007.0px">积极的</div>
<div class="be" style="top:996.5px"><svg width="48" height="45" viewBox="0 0 48 45"><path d="M15.5 34 L17 27.5 L30.5 14 Q32 12.5 33.5 14 L35 15.5 Q36.5 17 35 18.5 L21.5 32 Z M28.5 16 L33 20.5" fill="none" stroke="#fff" stroke-width="2.2" stroke-linejoin="round"/></svg></div>
<div class="bd" style="top:996.5px"><svg width="48" height="45" viewBox="0 0 48 45"><path d="M14 15.5 H34 M19.5 15.5 V12 Q19.5 11 20.5 11 H27.5 Q28.5 11 28.5 12 V15.5 M16.5 15.5 L17.5 33 Q17.6 34.5 19 34.5 H29 Q30.4 34.5 30.5 33 L31.5 15.5 M22 20 V30 M26 20 V30" fill="none" stroke="#fff" stroke-width="2.4"/></svg></div>
<div class="abs" style="left:478px;top:1064px;width:1970px;height:76px;background:#fff;border-top:1px solid #dfe3e8"></div>
<div class="td" style="left:491px;top:1090.5px">8</div>
<div class="td nm" style="left:668px;top:1090.5px">机器人-8</div>
<div class="img r8" style="left:1195px;top:1082.0px;height:41px"><svg width="60" height="41" viewBox="0 0 60 41"><defs><linearGradient id="g8" x1="0" y1="0" x2="0" y2="1"><stop offset="0" stop-color="#6a7a8c"/><stop offset="0.5" stop-color="#56606a"/><stop offset="1" stop-color="#8a8078"/></linearGradient></defs><rect width="60" height="41" fill="url(#g8)"/><rect x="0" y="0" width="10" height="22" fill="#7a5a4a"/><rect x="46" y="0" width="10" height="18" fill="#9aa8b8"/><rect x="35" y="0" width="8" height="10" fill="#c8d4dc"/><rect x="40" y="26" width="14" height="5" fill="#c0c4c4"/><rect x="21" y="8" width="18" height="14" rx="3" fill="#c8ccd0"/><circle cx="26" cy="15" r="2.5" fill="#f0a820"/><circle cx="35" cy="15" r="2" fill="#f0a820"/><rect x="24" y="22" width="12" height="6" fill="#3a2a20"/><path d="M25 28 L23 38 M35 28 L37 38 M22 24 L17 33 M38 24 L43 33" stroke="#2a2a30" stroke-width="2.2"/></svg></div>
<div class="td" style="left:1436px;top:1090.5px">6000</div>
<div class="td" style="left:1663px;top:1090.5px">120天</div>
<div class="td st" style="left:1952px;top:1090.5px">积极的</div>
<div class="be" style="top:1080.0px"><svg width="48" height="45" viewBox="0 0 48 45"><path d="M15.5 34 L17 27.5 L30.5 14 Q32 12.5 33.5 14 L35 15.5 Q36.5 17 35 18.5 L21.5 32 Z M28.5 16 L33 20.5" fill="none" stroke="#fff" stroke-width="2.2" stroke-linejoin="round"/></svg></div>
<div class="bd" style="top:1080.0px"><svg width="48" height="45" viewBox="0 0 48 45"><path d="M14 15.5 H34 M19.5 15.5 V12 Q19.5 11 20.5 11 H27.5 Q28.5 11 28.5 12 V15.5 M16.5 15.5 L17.5 33 Q17.6 34.5 19 34.5 H29 Q30.4 34.5 30.5 33 L31.5 15.5 M22 20 V30 M26 20 V30" fill="none" stroke="#fff" stroke-width="2.4"/></svg></div>
<div class="abs" style="left:478px;top:1140px;width:1970px;height:76px;background:#f9fafa;border-top:1px solid #dfe3e8"></div>
<div class="td" style="left:491px;top:1166.5px">9</div>
<div class="td nm" style="left:668px;top:1166.5px">机器人-9</div>
<div class="img r9" style="left:1195px;top:1161.0px;height:35px"><svg width="60" height="35" viewBox="0 0 60 35"><rect width="60" height="35" fill="#14233c"/><rect x="0" y="0" width="32" height="25" fill="#2a3450"/><path d="M6 3 V24 M12 4 V24 M18 5 V24 M24 6 V24" stroke="#8a6a40" stroke-width="1.4"/><rect y="25" width="60" height="10" fill="#3a5878"/><circle cx="52" cy="7" r="2" fill="#e8b060"/><circle cx="50" cy="14" r="1.5" fill="#d89850"/><circle cx="38" cy="13" r="7" fill="#5a7898"/><circle cx="35" cy="13" r="1.8" fill="#40d0ff"/><circle cx="41" cy="13" r="1.8" fill="#40d0ff"/><rect x="33" y="19" width="10" height="8" fill="#4a6888"/><path d="M35 27 V32 M41 27 V32" stroke="#1a2a3a" stroke-width="2"/></svg></div>
<div class="td" style="left:1436px;top:1166.5px">8000</div>
<div class="td" style="left:1663px;top:1166.5px">275天</div>
<div class="td st" style="left:1952px;top:1166.5px">积极的</div>
<div class="be" style="top:1156.0px"><svg width="48" height="45" viewBox="0 0 48 45"><path d="M15.5 34 L17 27.5 L30.5 14 Q32 12.5 33.5 14 L35 15.5 Q36.5 17 35 18.5 L21.5 32 Z M28.5 16 L33 20.5" fill="none" stroke="#fff" stroke-width="2.2" stroke-linejoin="round"/></svg></div>
<div class="bd" style="top:1156.0px"><svg width="48" height="45" viewBox="0 0 48 45"><path d="M14 15.5 H34 M19.5 15.5 V12 Q19.5 11 20.5 11 H27.5 Q28.5 11 28.5 12 V15.5 M16.5 15.5 L17.5 33 Q17.6 34.5 19 34.5 H29 Q30.4 34.5 30.5 33 L31.5 15.5 M22 20 V30 M26 20 V30" fill="none" stroke="#fff" stroke-width="2.4"/></svg></div>
<div class="abs" style="left:478px;top:1216px;width:1970px;height:76px;background:#fff;border-top:1px solid #dfe3e8"></div>
<div class="td" style="left:491px;top:1242.5px">10</div>
<div class="td nm" style="left:668px;top:1242.5px">机器人-10</div>
<div class="img r10" style="left:1195px;top:1233.0px;height:43px"><svg width="60" height="43" viewBox="0 0 60 43"><rect width="60" height="43" fill="#ecd23a"/><rect x="44" y="0" width="16" height="43" fill="#dcc030"/><rect y="36" width="60" height="7" fill="#f0dc50"/><ellipse cx="31" cy="38" rx="15" ry="1.5" fill="#f8f8f0"/><ellipse cx="17" cy="31.3925" rx="5.248749999999999" ry="6.353749999999999" fill="#e8e4d8"/><circle cx="17" cy="22" r="5.5249999999999995" fill="#e8e4d8"/><ellipse cx="17" cy="22.51" rx="3.8674999999999993" ry="3.03875" fill="#0d1a2a"/><circle cx="15.3" cy="22.51" r="0.935" fill="#3aa0e0"/><circle cx="18.7" cy="22.51" r="0.935" fill="#3aa0e0"/><path d="M14.875 28.025 L17 30.075 L19.125 28.025 Z" fill="#3aa0d8"/><ellipse cx="33" cy="31.3925" rx="5.248749999999999" ry="6.353749999999999" fill="#e8e4d8"/><circle cx="33" cy="22" r="5.5249999999999995" fill="#e8e4d8"/><ellipse cx="33" cy="22.51" rx="3.8674999999999993" ry="3.03875" fill="#0d1a2a"/><circle cx="31.3" cy="22.51" r="0.935" fill="#3aa0e0"/><circle cx="34.7" cy="22.51" r="0.935" fill="#3aa0e0"/><path d="M30.875 28.025 L33 30.075 L35.125 28.025 Z" fill="#3aa0d8"/><path d="M50 30 L58 40 M58 30 L50 40 M48 35 H59" stroke="#c07020" stroke-width="1.8"/><rect x="49" y="22" width="4" height="2" fill="#6a90d0"/><rect x="55" y="22" width="4" height="2" fill="#e05050"/></svg></div>
<div class="td" style="left:1436px;top:1242.5px">10000</div>
<div class="td" style="left:1663px;top:1242.5px">275天</div>
<div class="td st" style="left:1952px;top:1242.5px">积极的</div>
<div class="be" style="top:1232.0px"><svg width="48" height="45" viewBox="0 0 48 45"><path d="M15.5 34 L17 27.5 L30.5 14 Q32 12.5 33.5 14 L35 15.5 Q36.5 17 35 18.5 L21.5 32 Z M28.5 16 L33 20.5" fill="none" stroke="#fff" stroke-width="2.2" stroke-linejoin="round"/></svg></div>
<div class="bd" style="top:1232.0px"><svg width="48" height="45" viewBox="0 0 48 45"><path d="M14 15.5 H34 M19.5 15.5 V12 Q19.5 11 20.5 11 H27.5 Q28.5 11 28.5 12 V15.5 M16.5 15.5 L17.5 33 Q17.6 34.5 19 34.5 H29 Q30.4 34.5 30.5 33 L31.5 15.5 M22 20 V30 M26 20 V30" fill="none" stroke="#fff" stroke-width="2.4"/></svg></div>
<div class="abs" style="left:480px;top:1313px;font-size:22px;line-height:28px;color:#6f7f90;letter-spacing:0.3px;white-space:nowrap">显示 1 至 10 条，共 10 条</div>
<div class="pg" style="left:2196px">以前的</div>
<div class="abs" style="left:2299px;top:1347px;width:46px;height:49px;border-radius:7px;background:#5b8def;color:#fff;font-weight:bold;font-size:21px;line-height:49px;text-align:center">1</div>
<div class="pg" style="left:2354px">下一个</div>
<!-- watermark -->
<svg class="abs" style="left:2326px;top:1358px" width="70" height="90" viewBox="0 0 70 90"><defs><radialGradient id="eg1" cx="30%" cy="30%" r="70%"><stop offset="0" stop-color="#fee82a"/><stop offset="0.5" stop-color="#fbcb0e"/><stop offset="1" stop-color="#f3a81f"/></radialGradient><radialGradient id="eg2" cx="65%" cy="68%" r="60%"><stop offset="0" stop-color="#feea2a"/><stop offset="0.5" stop-color="#fbcd0c"/><stop offset="1" stop-color="#f2a51f"/></radialGradient><linearGradient id="cr1" x1="0" y1="0" x2="0" y2="1"><stop offset="0" stop-color="#f8b81c"/><stop offset="0.7" stop-color="#ee7a2a"/><stop offset="1" stop-color="#e2402a"/></linearGradient><linearGradient id="cr2" x1="0" y1="0" x2="0" y2="1"><stop offset="0" stop-color="#e2402a"/><stop offset="0.4" stop-color="#ee7a2a"/><stop offset="1" stop-color="#f8b81c"/></linearGradient></defs><ellipse cx="33.7" cy="43.9" rx="29.4" ry="40.2" fill="url(#eg2)"/><path d="M33.7 3.7 A29.4 40.2 0 0 1 63.1 43.9 L63 47 C56 42 48 40 42 41.5 C34 43 28 44 22 43 C14 38 12 20 20 8 C24 5 29 3.7 33.7 3.7 Z" fill="url(#eg1)"/><path d="M20 8 C8 18 4.5 35 5 46 C12 50 20 50 30 49 C20 46 12 30 20 8 Z" fill="url(#cr1)"/><path d="M63 47 C62 60 56 72 46 80 C54 66 54 52 40 46 C48 44 56 44 63 47 Z" fill="url(#cr2)"/><path d="M20.5 7.5 C11 21 10 39 23 44.5 C30 47.5 37 42.5 44.5 44 C55 47 57 62 46.5 80.5" fill="none" stroke="#fff" stroke-width="4.2"/></svg>
<div class="abs" style="left:2398px;top:1362px;font-size:50px;line-height:50px;color:#f26b21;letter-spacing:-3px;white-space:nowrap;transform:scaleX(0.8);transform-origin:left top">K1</div>
<div class="abs" style="left:2446px;top:1360px;font-size:44px;line-height:56px;color:#1e8c1e;font-weight:bold;white-space:nowrap">源</div>
<div class="abs" style="left:2490px;top:1360px;font-size:42px;line-height:56px;color:#f26b21;font-weight:bold;white-space:nowrap">码</div>
<div class="abs" style="left:2397px;top:1420px;font-family:'Liberation Mono',monospace;font-size:19px;line-height:22px;color:#1e8c1e;letter-spacing:5.6px;white-space:nowrap">k1ym.com</div>
<div id="scroll"></div>
<div id="thumb"></div>
<svg class="abs" style="left:2540px;top:77px" width="16" height="12" viewBox="0 0 16 12"><path d="M2.5 10 L8 3.5 L13.5 10 Z" fill="#a3a3a3"/></svg>
<svg class="abs" style="left:2540px;top:1461px" width="16" height="12" viewBox="0 0 16 12"><path d="M2.5 2 L8 8.5 L13.5 2 Z" fill="#505050"/></svg>

</body></html>
